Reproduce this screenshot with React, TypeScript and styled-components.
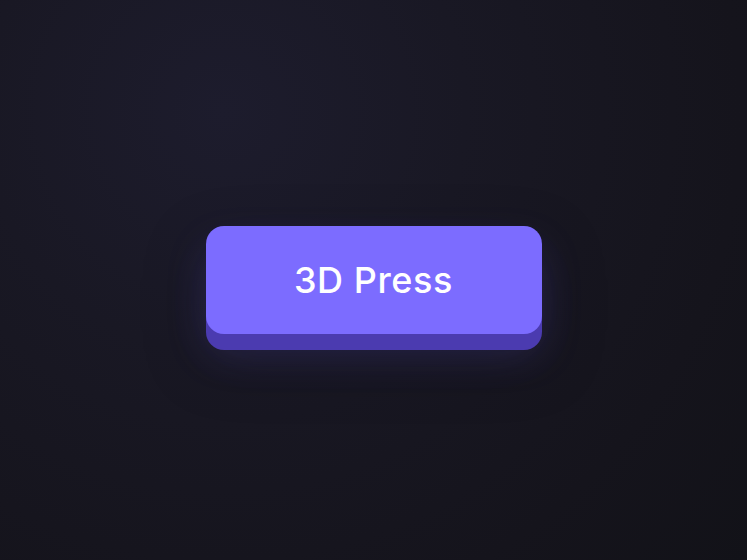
import React from 'react';
import styled, { createGlobalStyle } from 'styled-components';

const GlobalStyle = createGlobalStyle`
  html, body, #root {
    margin: 0;
    height: 100%;
  }
  body {
    background: #15141c;
    font-family: Inter, "Noto Sans", sans-serif;
  }
`;

export default function App(): JSX.Element {
  return (
    <>
      <GlobalStyle />
      <Stage>
        <PressButton type="button">3D Press</PressButton>
      </Stage>
    </>
  );
}

const Stage = styled.div`
  height: 100%;
  display: flex;
  align-items: center;
  justify-content: center;
  background:
    radial-gradient(circle at 30% 20%, #1d1c2d 0%, #191824 35%, #15141c 75%, #121218 100%);
`;

const PressButton = styled.button`
  width: 336px;
  height: 108px;
  border: none;
  border-radius: 18px;
  background-color: #7c6cff;
  color: #ffffff;
  font-family: Inter, "Noto Sans", sans-serif;
  font-size: 36px;
  font-weight: 500;
  letter-spacing: 0.6px;
  cursor: pointer;
  box-shadow:
    0 16px 0 #4b3bb0,
    0 20px 40px rgba(124, 108, 255, 0.2),
    0 24px 60px rgba(10, 8, 20, 0.35);
`;
